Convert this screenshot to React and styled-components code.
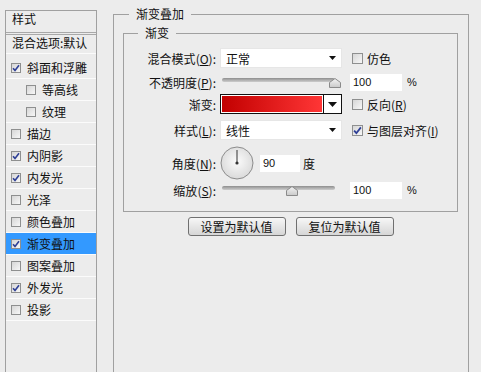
import React from "react";
import styled, { createGlobalStyle } from "styled-components";

const GlobalStyle = createGlobalStyle`
  html, body {
    margin: 0;
    padding: 0;
    background: #ececec;
  }
  body {
    font-family: "Noto Sans CJK SC", "Noto Sans", sans-serif;
    font-size: 12px;
    color: #111;
  }
`;

const Window = styled.div`
  display: flex;
  align-items: flex-start;
  width: 481px;
  height: 372px;
  overflow: hidden;
  background: #ececec;
`;

/* ---------- left style list ---------- */

const StyleList = styled.div`
  box-sizing: border-box;
  width: 92px;
  height: 380px;
  margin: 10px 0 0 5px;
  border: 1px solid #a0a0a0;
  border-bottom: none;
  flex: none;
`;

const ListHeader = styled.div`
  height: 21px;
  line-height: 15px;
  padding-left: 6px;
  border-bottom: 3px double #a8a8a8;
`;

const BlendRow = styled.div`
  height: 18px;
  line-height: 15px;
  padding-left: 6px;
  white-space: nowrap;
  overflow: hidden;
  border-bottom: 1px solid #fbfbfb;
`;

const Items = styled.div`
  margin-top: 3px;
`;

const Item = styled.div`
  display: flex;
  align-items: center;
  gap: 6px;
  height: 21px;
  padding-left: ${(p) => (p.$indent ? 20 : 5)}px;
  border-bottom: 1px solid #fbfbfb;
  background: ${(p) => (p.$selected ? "#3399ff" : "transparent")};
  white-space: nowrap;
`;

const Box = styled.span`
  box-sizing: border-box;
  display: inline-flex;
  align-items: center;
  justify-content: center;
  flex: none;
  width: ${(p) => p.$size}px;
  height: ${(p) => p.$size}px;
  border: 1px solid #8e8f8f;
  background: linear-gradient(135deg, #d6d6d6, #f7f7f7);
`;

const Check = ({ checked, size = 10 }) => (
  <Box $size={size}>
    {checked && (
      <svg width={size - 2} height={size - 2} viewBox="0 0 8 8">
        <path d="M1 4.2 L3 6.4 L7 1.2" fill="none" stroke="#2e3f96" strokeWidth="1.6" />
      </svg>
    )}
  </Box>
);

/* ---------- right settings ---------- */

const Group = styled.fieldset`
  box-sizing: border-box;
  min-width: 0;
  margin: 0;
  border: 1px solid #a0a0a0;
`;

const OuterGroup = styled(Group)`
  flex: none;
  width: 356px;
  height: 380px;
  margin: 7px 0 0 16px;
  padding: 5px 10px 0 9px;
  border-bottom: none;
`;

const InnerGroup = styled(Group)`
  padding: 8px 0 11px 0;
`;

const Legend = styled.legend`
  line-height: 14px;
  padding: 0 7px;
  margin-left: ${(p) => p.$offset}px;
`;

const Row = styled.div`
  display: grid;
  grid-template-columns: 92px 122px 1fr;
  column-gap: 4px;
  align-items: center;
  height: ${(p) => p.$h}px;
  margin-top: ${(p) => p.$mt || 0}px;
`;

const Label = styled.div`
  text-align: right;
  white-space: nowrap;
`;

const Right = styled.div`
  display: flex;
  align-items: center;
  padding-left: 4px;
  white-space: nowrap;
`;

const CheckLabel = styled.label`
  display: flex;
  align-items: center;
  gap: 4px;
  margin-left: 2px;
`;

const Select = styled.div`
  box-sizing: border-box;
  display: flex;
  align-items: center;
  justify-content: space-between;
  height: 20px;
  padding: 0 5px 0 5px;
  background: #fff;
  border: 1px solid #e6e6e6;
`;

const Arrow = () => (
  <svg width="7" height="4" viewBox="0 0 7 4">
    <polygon points="0,0 7,0 3.5,4" fill="#111" />
  </svg>
);

const GradientPicker = styled.div`
  box-sizing: border-box;
  display: flex;
  height: 20px;
  border: 1px solid #111;
`;

const Swatch = styled.div`
  flex: 1;
  border: 1px solid #fff;
  background: linear-gradient(to right, #c20000, #ff3636);
`;

const SwatchButton = styled.div`
  display: flex;
  align-items: center;
  justify-content: center;
  width: 17px;
  border-left: 1px solid #111;
  background: #fff;
`;

const Slider = styled.div`
  position: relative;
  width: 113px;
  height: 12px;
  margin-left: 2px;
`;

const Track = styled.div`
  height: 4px;
  margin-top: 2px;
  border-radius: 2px;
  background: linear-gradient(#8e8e8e, #cdcdcd);
`;

const Thumb = styled.svg`
  position: absolute;
  top: 2px;
  transform: translateX(-50%);
`;

const NumberBox = styled.div`
  box-sizing: border-box;
  width: ${(p) => p.$w}px;
  height: 17px;
  padding-left: 3px;
  line-height: 17px;
  background: #fff;
  font-family: "Liberation Sans", Arial, sans-serif;
  font-size: 11px;
`;

const Unit = styled.span`
  margin-left: ${(p) => p.$gap}px;
  font-family: ${(p) => (p.$latin ? '"Liberation Sans", Arial, sans-serif' : "inherit")};
  font-size: ${(p) => (p.$latin ? 11 : 12)}px;
`;

const AngleCell = styled.div`
  grid-column: 2 / 4;
  display: flex;
  align-items: center;
`;

const Dial = styled.svg`
  flex: none;
  margin-right: 6px;
`;

const Buttons = styled.div`
  display: flex;
  justify-content: center;
  gap: 10px;
  margin-top: 5px;
`;

const Button = styled.button`
  box-sizing: border-box;
  width: 98px;
  height: 19px;
  padding: 0;
  border: 1px solid #707070;
  border-radius: 3px;
  background: linear-gradient(#f7f7f7, #e6e6e6 50%, #d6d6d6);
  font-family: inherit;
  font-size: 12px;
  line-height: 17px;
  color: #111;
`;

const Opt = ({ text, k, colon = true }) => (
  <span>
    {text}(<u>{k}</u>){colon ? ":" : ""}
  </span>
);

const RangeSlider = ({ pct }) => (
  <Slider>
    <Track />
    <Thumb width="12" height="10" viewBox="0 0 12 10" style={{ left: `${pct}%` }}>
      <defs>
        <linearGradient id={`tg${pct}`} x1="0" y1="0" x2="0" y2="1">
          <stop offset="0" stopColor="#f4f4f4" />
          <stop offset="1" stopColor="#c9c9c9" />
        </linearGradient>
      </defs>
      <polygon points="6,0.5 11.5,4.5 11.5,9.5 0.5,9.5 0.5,4.5" fill={`url(#tg${pct})`} stroke="#8a8a8a" />
    </Thumb>
  </Slider>
);

const styles = [
  { name: "斜面和浮雕", checked: true },
  { name: "等高线", indent: true },
  { name: "纹理", indent: true },
  { name: "描边" },
  { name: "内阴影", checked: true },
  { name: "内发光", checked: true },
  { name: "光泽" },
  { name: "颜色叠加" },
  { name: "渐变叠加", checked: true, selected: true },
  { name: "图案叠加" },
  { name: "外发光", checked: true },
  { name: "投影" },
];

export default function App() {
  return (
    <>
      <GlobalStyle />
      <Window>
        <StyleList>
          <ListHeader>样式</ListHeader>
          <BlendRow>混合选项:默认</BlendRow>
          <Items>
            {styles.map((s) => (
              <Item key={s.name} $indent={s.indent} $selected={s.selected}>
                <Check checked={s.checked} />
                <span>{s.name}</span>
              </Item>
            ))}
          </Items>
        </StyleList>

        <OuterGroup>
          <Legend $offset={6}>渐变叠加</Legend>
          <InnerGroup>
            <Legend $offset={14}>渐变</Legend>

            <Row $h={20}>
              <Label><Opt text="混合模式" k="O" /></Label>
              <Select>正常<Arrow /></Select>
              <Right>
                <CheckLabel><Check size={11} /><span>仿色</span></CheckLabel>
              </Right>
            </Row>

            <Row $h={20} $mt={4}>
              <Label><Opt text="不透明度" k="P" /></Label>
              <RangeSlider pct={100} />
              <Right>
                <NumberBox $w={52}>100</NumberBox>
                <Unit $gap={5} $latin>%</Unit>
              </Right>
            </Row>

            <Row $h={20} $mt={2}>
              <Label>渐变:</Label>
              <GradientPicker>
                <Swatch />
                <SwatchButton>
                  <svg width="9" height="5" viewBox="0 0 9 5">
                    <polygon points="0,0 9,0 4.5,5" fill="#111" />
                  </svg>
                </SwatchButton>
              </GradientPicker>
              <Right>
                <CheckLabel><Check size={11} /><Opt text="反向" k="R" colon={false} /></CheckLabel>
              </Right>
            </Row>

            <Row $h={20} $mt={6}>
              <Label><Opt text="样式" k="L" /></Label>
              <Select>线性<Arrow /></Select>
              <Right>
                <CheckLabel><Check size={11} checked /><Opt text="与图层对齐" k="I" colon={false} /></CheckLabel>
              </Right>
            </Row>

            <Row $h={34} $mt={6}>
              <Label><Opt text="角度" k="N" /></Label>
              <AngleCell>
                <Dial width="34" height="34" viewBox="0 0 34 34">
                  <defs>
                    <radialGradient id="dialFill" cx="50%" cy="45%" r="55%">
                      <stop offset="0" stopColor="#fbfbfb" />
                      <stop offset="1" stopColor="#dadada" />
                    </radialGradient>
                  </defs>
                  <circle cx="17" cy="17" r="16" fill="url(#dialFill)" stroke="#8c8c8c" />
                  <line x1="17" y1="17" x2="17" y2="4" stroke="#333" strokeWidth="1" />
                  <circle cx="17" cy="17" r="1.6" fill="#333" />
                </Dial>
                <NumberBox $w={40}>90</NumberBox>
                <Unit $gap={3}>度</Unit>
              </AngleCell>
            </Row>

            <Row $h={20}>
              <Label><Opt text="缩放" k="S" /></Label>
              <RangeSlider pct={62} />
              <Right>
                <NumberBox $w={52}>100</NumberBox>
                <Unit $gap={5} $latin>%</Unit>
              </Right>
            </Row>
          </InnerGroup>

          <Buttons>
            <Button>设置为默认值</Button>
            <Button>复位为默认值</Button>
          </Buttons>
        </OuterGroup>
      </Window>
    </>
  );
}
